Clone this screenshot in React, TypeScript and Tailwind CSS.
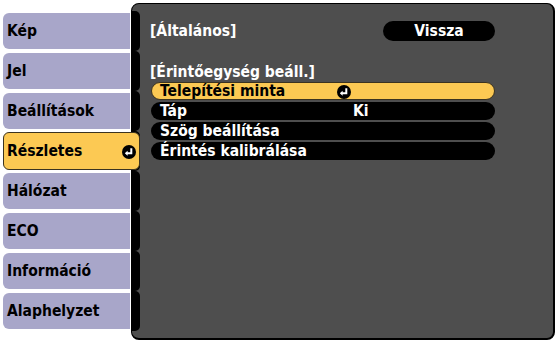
import React from "react";

const font = { fontFamily: '"DejaVu Sans Condensed", "DejaVu Sans", sans-serif', fontStretch: "condensed" } as const;

const tabs = ["Kép", "Jel", "Beállítások", "Részletes", "Hálózat", "ECO", "Információ", "Alaphelyzet"];
const selectedTab = 3;

const rows = [
  { label: "Telepítési minta", value: "enter" },
  { label: "Táp", value: "Ki" },
  { label: "Szög beállítása", value: "" },
  { label: "Érintés kalibrálása", value: "" },
];

function EnterIcon() {
  return (
    <svg width="14" height="14" viewBox="0 0 14 14" aria-hidden="true">
      <circle cx="7" cy="7" r="7" fill="#000" />
      <path d="M9.3 3.2 V8.2 H4.6" fill="none" stroke="#fff" strokeWidth="2" />
      <path d="M2.8 8.2 L5.6 5.7 V10.7 Z" fill="#fff" />
    </svg>
  );
}

export default function App() {
  return (
    <div className="flex h-[344px] w-[560px] bg-white text-[15.5px] font-bold leading-none" style={font}>
      <div className="flex w-[131px] shrink-0 flex-col gap-[4px] pl-[3px] pt-[13px]">
        {tabs.map((tab, i) =>
          i === selectedTab ? (
            <div
              key={tab}
              className="relative z-10 -my-px flex h-[38px] w-[137px] items-center justify-between rounded-[6px] border border-[#3b3320] bg-[#fcc953] pl-[3px] pr-[3px] pt-[2px] text-black"
            >
              <span>{tab}</span>
              <EnterIcon />
            </div>
          ) : (
            <div key={tab} className="flex h-[36px] w-[127px] items-center rounded-l-[6px] bg-[#a8a6c9] pl-[4px] pt-[2px] text-black">
              {tab}
            </div>
          ),
        )}
      </div>

      <div className="mt-[3px] flex h-[337px] w-[424px] overflow-hidden rounded-[8px] border border-r-2 border-b-2 border-black bg-[#4e4e4e]">
        <div className="flex w-[8px] shrink-0 flex-col pt-[7px]">
          {tabs.map((tab) => (
            <div key={tab} className="h-[40px] rounded-r-[5px] bg-black" />
          ))}
        </div>

        <div className="flex w-[355px] flex-col pl-[11px] pt-[17px] text-white">
          <div className="flex h-[20px] items-center justify-between">
            <span className="-ml-px pt-[2px]">[Általános]</span>
            <div className="flex h-[20px] w-[112px] items-center justify-center rounded-full bg-black pt-[2px]">Vissza</div>
          </div>

          <div className="mt-[21px] -ml-px flex h-[20px] items-center pt-[2px]">[Érintőegység beáll.]</div>

          <div className="flex flex-col gap-[2px]">
            {rows.map((row, i) => (
              <div
                key={row.label}
                className={
                  i === 0
                    ? "flex h-[18px] items-center rounded-full border border-[#3b3320] bg-[#fcc953] pl-[8px] pt-[1px] text-black"
                    : "flex h-[18px] items-center rounded-full bg-black pl-[9px] pt-[2px] text-white"
                }
              >
                <span className="w-[177px] shrink-0">{row.label}</span>
                {row.value === "enter" ? <EnterIcon /> : <span className="pl-[16px]">{row.value}</span>}
              </div>
            ))}
          </div>
        </div>
      </div>
    </div>
  );
}
